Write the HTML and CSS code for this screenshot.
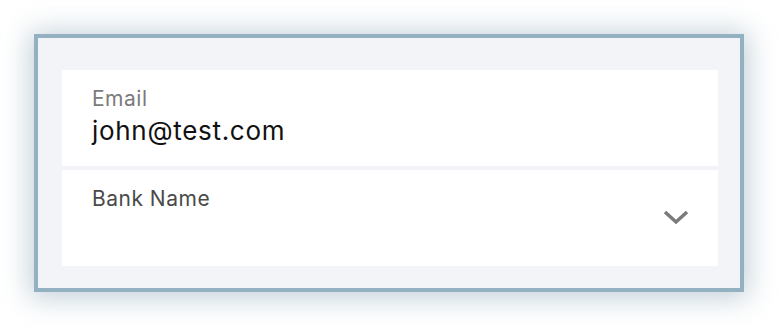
FILE: index.html
```html
<!DOCTYPE html>
<html lang="en">

<head>
  <meta charset="UTF-8">
  <meta name="viewport" content="width=device-width, initial-scale=1.0">
  <title>Account Form</title>
  <link rel="stylesheet" href="styles.css">
</head>

<body>
  <div class="frame">
    <div class="card">
      <div class="field">
        <label class="field-label" for="email">Email</label>
        <div class="field-value" id="email">john@test.com</div>
      </div>
      <div class="field field-select">
        <label class="field-label">Bank Name</label>
        <svg class="chevron" width="28" height="18" viewBox="0 0 28 18">
          <path d="M3 4 L14 14 L25 4" fill="none" stroke="#7a7a7a" stroke-width="3.5" />
        </svg>
      </div>
    </div>
  </div>
</body>

</html>
```

FILE: styles.css
```css
body {
  font-family: Inter, "Liberation Sans", sans-serif;
  margin: 0;
  padding: 34px;
  background: #ffffff;
}

.frame {
  width: 710px;
  height: 258px;
  box-sizing: border-box;
  border: 4px solid #93b1c0;
  background-color: #f3f4f7;
  padding: 32px 22px 22px 24px;
  box-shadow: 0 2px 26px 4px rgba(120, 150, 170, 0.45);
}

.card {
  display: grid;
  row-gap: 4px;
}

.field {
  position: relative;
  height: 96px;
  background: #ffffff;
  padding: 17px 30px 0;
  box-sizing: border-box;
}

.field-label {
  display: block;
  font-size: 21px;
  color: #7b7b7b;
  line-height: 24px;
  letter-spacing: 0.5px;
}

.field-select .field-label {
  color: #4a4a4a;
}

.field-value {
  font-size: 26px;
  color: #111111;
  line-height: 32px;
  margin-top: 4px;
  letter-spacing: 0.7px;
}

.chevron {
  position: absolute;
  right: 28px;
  top: 38px;
}
```
